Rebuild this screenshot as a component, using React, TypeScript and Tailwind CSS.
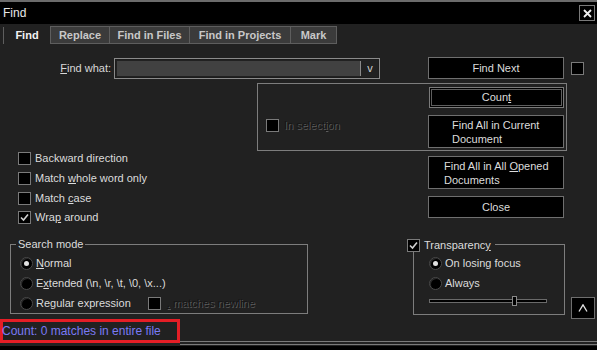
import React from "react";

function Check({ checked = false, className = "" }: { checked?: boolean; className?: string }) {
  return (
    <div className={`w-[13px] h-[13px] shrink-0 border border-[#7a7a7a] bg-black flex items-center justify-center ${className}`}>
      {checked && (
        <svg width="9" height="9" viewBox="0 0 9 9">
          <polyline points="1,4.5 3.5,7 8,1.5" fill="none" stroke="#d0d0d0" strokeWidth="1.6" />
        </svg>
      )}
    </div>
  );
}

function Radio({ on = false }: { on?: boolean }) {
  return (
    <div className="w-[13px] h-[13px] shrink-0 rounded-full bg-black border border-[#4a4a4a] shadow-[inset_1px_1px_0_#2a2a2a] flex items-center justify-center">
      {on && <div className="w-[5px] h-[5px] rounded-full bg-[#e0e0e0]" />}
    </div>
  );
}

const disabled = "text-[#151515] [text-shadow:1px_1px_0_#5c5c5c]";

export default function App() {
  return (
    <div className="w-[597px] h-[350px] overflow-hidden bg-[#212121] text-[#dcdcdc] text-[11px] leading-none font-['Liberation_Sans',Arial,sans-serif] flex flex-col">
      {/* top line */}
      <div className="h-[2px] bg-[#6b6b6b]" />
      {/* title bar */}
      <div className="h-[22px] bg-black flex items-start justify-between pl-[3px] pr-[2px]">
        <span className="text-[12px] text-[#e8e8e8] mt-[5px]">Find</span>
        <div className="w-[16px] h-[16px] mt-[3px] border border-[#7a7a7a] flex items-center justify-center">
          <svg width="9" height="9" viewBox="0 0 9 9">
            <path d="M1 1 L8 8 M8 1 L1 8" stroke="#f0f0f0" strokeWidth="1.8" />
          </svg>
        </div>
      </div>
      {/* tabs */}
      <div className="h-[20px] flex items-end pl-[3px] font-bold">
        <div className="w-[47px] h-[17px] border-l border-[#5e5e5e] flex items-center justify-center text-[#f2f2f2]">Find</div>
        <div className="w-[59px] h-[18px] bg-[#3b3b3b] border-l border-t border-b border-[#5e5e5e] flex items-center justify-center text-[#c8c8c8]">Replace</div>
        <div className="w-[80px] h-[18px] bg-[#3b3b3b] border-l border-t border-b border-[#5e5e5e] flex items-center justify-center text-[#c8c8c8]">Find in Files</div>
        <div className="w-[101px] h-[18px] bg-[#3b3b3b] border-l border-t border-b border-[#5e5e5e] flex items-center justify-center text-[#c8c8c8]">Find in Projects</div>
        <div className="w-[47px] h-[18px] bg-[#3b3b3b] border border-[#5e5e5e] flex items-center justify-center text-[#c8c8c8]">Mark</div>
      </div>

      {/* Row A */}
      <div className="mt-[13px] h-[22px] flex items-center">
        <div className="w-[111px] text-right text-[#d8d8d8]">
          <span>
            <u>F</u>ind what:
          </span>
        </div>
        <div className="ml-[3px] w-[266px] h-[21px] border border-[#8a8a8a] shadow-[inset_0_0_0_1px_#1c1c1c] flex">
          <div className="flex-1 m-[2px] mr-0 bg-[#414141]" />
          <div className="w-px my-[2px] bg-[#8a8a8a]" />
          <div className="w-[18px] flex items-center justify-center text-[#d0d0d0]">v</div>
        </div>
        <div className="ml-[48px] w-[136px] h-[22px] bg-black border border-[#6f6f6f] flex items-center justify-center">
          <span>Find Next</span>
        </div>
        <Check className="ml-[7px]" />
      </div>

      {/* Row B */}
      <div className="mt-[4px] ml-[257px] w-[310px] h-[68px] border border-[#7d7d7d] flex">
        <div className="w-[170px] pl-[8px] pt-[35px]">
          <div className="flex items-center gap-[5px]">
            <Check />
            <span className={disabled}>
              In select<u>i</u>on
            </span>
          </div>
        </div>
        <div className="w-[137px] pt-[3px] flex flex-col items-start">
          <div className="ml-px w-[135px] h-[21px] bg-black border border-[#7a7a7a] shadow-[inset_0_0_0_1px_#000,inset_0_0_0_2px_#5e5e5e] flex items-center justify-center">
            <span>
              Coun<u>t</u>
            </span>
          </div>
          <div className="mt-[7px] w-[136px] h-[33px] bg-black border border-[#6f6f6f] flex items-center pl-[23px] leading-[14px]">
            <span>
              Find All in Current
              <br />
              Document
            </span>
          </div>
        </div>
      </div>

      {/* Row C */}
      <div className="h-[86px] flex">
        <div className="w-[428px] pl-[18px] flex flex-col">
          <div className="mt-[1px] h-[13px] flex items-center gap-[4px]">
            <Check />
            <span>Backward direction</span>
          </div>
          <div className="mt-[7px] h-[13px] flex items-center gap-[4px]">
            <Check />
            <span>
              Match <u>w</u>hole word only
            </span>
          </div>
          <div className="mt-[7px] h-[13px] flex items-center gap-[4px]">
            <Check />
            <span>
              Match <u>c</u>ase
            </span>
          </div>
          <div className="mt-[6px] h-[13px] flex items-center gap-[4px]">
            <Check checked />
            <span>
              Wra<u>p</u> around
            </span>
          </div>
        </div>
        <div className="w-[136px] flex flex-col">
          <div className="mt-[5px] h-[33px] bg-black border border-[#6f6f6f] flex items-center pl-[15px] leading-[14px]">
            <span>
              Find All in All <u>O</u>pened
              <br />
              Documents
            </span>
          </div>
          <div className="mt-[7px] h-[22px] bg-black border border-[#6f6f6f] flex items-center justify-center">
            <span>Close</span>
          </div>
        </div>
      </div>

      {/* Row D */}
      <div className="h-[82px] flex items-start">
        <div className="relative ml-[10px] mt-[7px] w-[298px] h-[70px] border border-[#7d7d7d]">
          <div className="absolute top-[-6px] left-[5px] px-[2px] bg-[#212121]">Search mode</div>
          <div className="pl-[9px] pt-[12px] flex flex-col gap-[7px]">
            <div className="h-[13px] flex items-center gap-[3px]">
              <Radio on />
              <span>
                <u>N</u>ormal
              </span>
            </div>
            <div className="h-[13px] flex items-center gap-[3px]">
              <Radio />
              <span>
                E<u>x</u>tended (\n, \r, \t, \0, \x...)
              </span>
            </div>
            <div className="h-[13px] flex items-center gap-[3px]">
              <Radio />
              <span>Regular expression</span>
              <Check className="ml-[14px]" />
              <span className={`ml-[3px] ${disabled}`}>
                <u>.</u> matches newline
              </span>
            </div>
          </div>
        </div>

        <div className="relative ml-[105px] mt-[7px] w-[152px] h-[71px] border border-[#7d7d7d]">
          <div className="absolute top-[-6px] left-[-7px] pr-[4px] bg-[#212121] flex items-center gap-[4px]">
            <Check checked />
            <span>
              Transparenc<u>y</u>
            </span>
          </div>
          <div className="pl-[15px] pt-[12px] flex flex-col gap-[7px]">
            <div className="h-[13px] flex items-center gap-[3px]">
              <Radio on />
              <span>On losing focus</span>
            </div>
            <div className="h-[13px] flex items-center gap-[3px]">
              <Radio />
              <span>Always</span>
            </div>
          </div>
          <div className="relative ml-[15px] mt-[9px] w-[118px] h-[4px] border border-[#6a6a6a] bg-black">
            <div className="absolute left-[82px] top-[-4px] w-[5px] h-[10px] bg-black border border-[#8a8a8a]" />
          </div>
        </div>

        <div className="ml-[6px] mt-[60px] w-[24px] h-[22px] bg-black border border-[#6f6f6f] flex items-center justify-center">
          <svg width="10" height="8" viewBox="0 0 10 8">
            <polyline points="1,7.5 5,0.8 9,7.5" fill="none" stroke="#e0e0e0" strokeWidth="1.3" />
          </svg>
        </div>
      </div>

      {/* Status row */}
      <div className="h-[27px] flex items-start">
        <div className="w-[180px] h-[24px] border-[3px] border-[#e41e26] flex items-center text-[12px] text-[#7a7af5]">
          <span className="-ml-[1px]">Count: 0 matches in entire file</span>
        </div>
        <div className="flex-1 pt-[22px] flex flex-col">
          <div className="h-px bg-[#7a7a7a]" />
          <div className="h-[2px]" />
          <div className="h-px bg-[#7a7a7a]" />
        </div>
      </div>
      <div className="flex-1 bg-black" />
    </div>
  );
}
